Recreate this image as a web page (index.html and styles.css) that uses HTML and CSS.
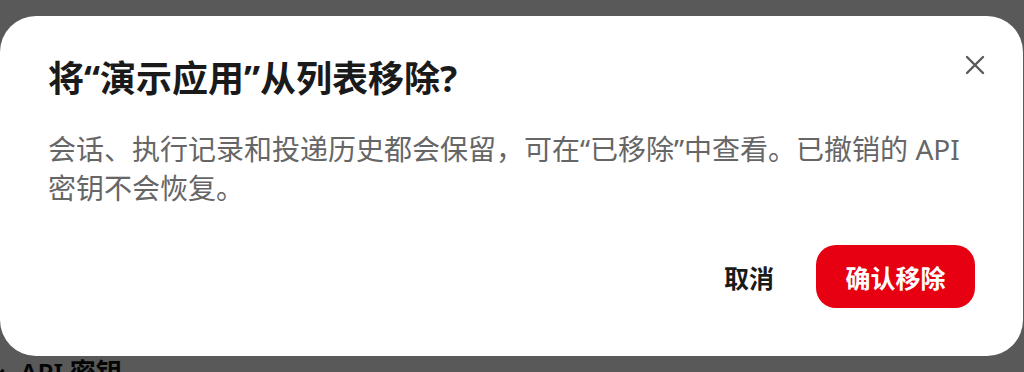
FILE: index.html
```html
<!DOCTYPE html>
<html lang="zh-CN">
<head>
<meta charset="utf-8">
<title>移除应用</title>
<link rel="stylesheet" href="styles.css">
</head>
<body>
<div class="page">
  <div class="page-row"><span class="page-mark"></span><span class="page-label">API 密钥</span></div>
</div>
<div class="overlay"></div>
<div class="modal" role="dialog" aria-modal="true">
  <div class="modal-header">
    <h2 class="modal-title">将“演示应用”从列表移除?</h2>
    <button class="close-btn" aria-label="关闭">
      <svg viewBox="0 0 20 20" width="20" height="20"><path d="M2 2 L18 18 M18 2 L2 18" stroke="#5a5a5a" stroke-width="2.4" stroke-linecap="round" fill="none"/></svg>
    </button>
  </div>
  <p class="modal-body">会话、执行记录和投递历史都会保留，可在“已移除”中查看。已撤销的 API 密钥不会恢复。</p>
  <div class="modal-footer">
    <button class="btn-cancel">取消</button>
    <button class="btn-confirm">确认移除</button>
  </div>
</div>
</body>
</html>
```
FILE: styles.css
```css
html, body {
  margin: 0;
  padding: 0;
  height: 100%;
  overflow: hidden;
}
body {
  background: #ffffff;
  font-family: "Noto Sans", "Noto Sans CJK SC", "Liberation Sans", sans-serif;
  position: relative;
}
.page {
  padding-top: 348px;
}
.page-row {
  display: flex;
  align-items: center;
  gap: 12px;
}
.page-mark {
  width: 8px;
  height: 8px;
  border-left: 3px solid #111;
  border-bottom: 3px solid #111;
  transform: rotate(45deg);
  margin-left: -3px;
  margin-top: 14px;
}
.page-label {
  font-size: 26px;
  font-weight: 600;
  color: #111;
  line-height: 36px;
  padding-top: 6px;
}
.overlay {
  position: absolute;
  inset: 0;
  background: rgba(0, 0, 0, 0.65);
}
.modal {
  position: absolute;
  left: 0;
  top: 16px;
  width: 1023px;
  height: 340px;
  box-sizing: border-box;
  background: #fff;
  border-radius: 36px;
  padding: 41px 48px 0 48px;
  display: flex;
  flex-direction: column;
}
.modal-header {
  display: flex;
  align-items: center;
  justify-content: space-between;
}
.modal-title {
  margin: 0;
  font-size: 36px;
  line-height: 44px;
  font-weight: 700;
  color: #1a1a1a;
}
.close-btn {
  width: 28px;
  height: 28px;
  margin-right: -14px;
  margin-top: -29px;
  padding: 0;
  border: none;
  background: none;
  display: flex;
  align-items: center;
  justify-content: center;
}
.modal-body {
  margin: 29px 0 0 0;
  font-size: 28px;
  line-height: 39px;
  color: #666666;
}
.modal-footer {
  margin-top: auto;
  margin-bottom: 48px;
  display: flex;
  justify-content: flex-end;
  align-items: center;
  gap: 20px;
}
.btn-cancel {
  font-family: inherit;
  font-size: 25px;
  font-weight: 700;
  color: #1a1a1a;
  background: none;
  border: none;
  padding: 0 22px;
  height: 63px;
}
.btn-confirm {
  font-family: inherit;
  font-size: 25px;
  font-weight: 700;
  color: #fff;
  background: #e60012;
  border: none;
  border-radius: 20px;
  height: 63px;
  width: 159px;
  padding: 0;
}
```
